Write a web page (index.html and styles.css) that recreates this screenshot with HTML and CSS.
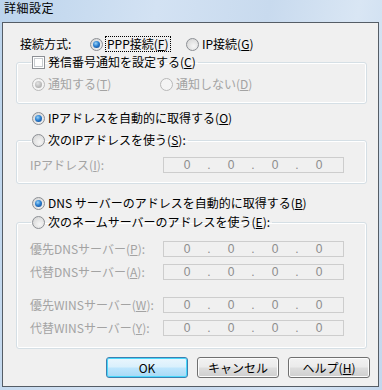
FILE: index.html
```html
<!DOCTYPE html>
<html lang="ja">
<head>
  <meta charset="UTF-8" />
  <title>詳細設定</title>
  <link rel="stylesheet" href="styles.css">
</head>
<body>

<div class="window">
  <div class="titlebar">詳細設定</div>

  <div class="client">

    <div class="row conn">
      <span class="conn-label">接続方式:</span>
      <span class="opt opt-ppp"><span class="radio checked"></span><span class="focus">PPP接続(<u>F</u>)</span></span>
      <span class="opt"><span class="radio"></span><span class="txt">IP接続(<u>G</u>)</span></span>
    </div>

    <fieldset class="group g1">
      <legend><span class="check"></span><span class="txt">発信番号通知を設定する(<u>C</u>)</span></legend>
      <div class="row sub disabled">
        <span class="opt opt-notify"><span class="radio checked"></span><span class="txt">通知する(<u>T</u>)</span></span>
        <span class="opt"><span class="radio"></span><span class="txt">通知しない(<u>D</u>)</span></span>
      </div>
    </fieldset>

    <div class="row solo ip-auto">
      <span class="radio checked"></span><span class="txt">IPアドレスを自動的に取得する(<u>O</u>)</span>
    </div>

    <fieldset class="group g2">
      <legend><span class="radio"></span><span class="txt">次のIPアドレスを使う(<u>S</u>):</span></legend>
      <div class="row field-row disabled">
        <span class="field-label">IPアドレス(<u>I</u>):</span>
        <span class="ipbox"><span class="oct">0</span><span class="dot">.</span><span class="oct">0</span><span class="dot">.</span><span class="oct">0</span><span class="dot">.</span><span class="oct">0</span></span>
      </div>
    </fieldset>

    <div class="row solo dns-auto">
      <span class="radio checked"></span><span class="txt">DNS サーバーのアドレスを自動的に取得する(<u>B</u>)</span>
    </div>

    <fieldset class="group g3">
      <legend><span class="radio"></span><span class="txt">次のネームサーバーのアドレスを使う(<u>E</u>):</span></legend>
      <div class="row field-row disabled">
        <span class="field-label">優先DNSサーバー(<u>P</u>):</span>
        <span class="ipbox"><span class="oct">0</span><span class="dot">.</span><span class="oct">0</span><span class="dot">.</span><span class="oct">0</span><span class="dot">.</span><span class="oct">0</span></span>
      </div>
      <div class="row field-row disabled close">
        <span class="field-label">代替DNSサーバー(<u>A</u>):</span>
        <span class="ipbox"><span class="oct">0</span><span class="dot">.</span><span class="oct">0</span><span class="dot">.</span><span class="oct">0</span><span class="dot">.</span><span class="oct">0</span></span>
      </div>
      <div class="row field-row disabled far">
        <span class="field-label">優先WINSサーバー(<u>W</u>):</span>
        <span class="ipbox"><span class="oct">0</span><span class="dot">.</span><span class="oct">0</span><span class="dot">.</span><span class="oct">0</span><span class="dot">.</span><span class="oct">0</span></span>
      </div>
      <div class="row field-row disabled close">
        <span class="field-label">代替WINSサーバー(<u>Y</u>):</span>
        <span class="ipbox"><span class="oct">0</span><span class="dot">.</span><span class="oct">0</span><span class="dot">.</span><span class="oct">0</span><span class="dot">.</span><span class="oct">0</span></span>
      </div>
    </fieldset>

    <div class="buttons">
      <button class="btn default">OK</button>
      <button class="btn">キャンセル</button>
      <button class="btn">ヘルプ(<u>H</u>)</button>
    </div>

  </div>
</div>

</body>
</html>
```

FILE: styles.css
```css
body {
  margin: 0;
  padding: 0;
  font-family: "Noto Sans CJK JP", "Liberation Sans", sans-serif;
  font-size: 12px;
  color: #000;
}
.window {
  width: 382px;
  height: 390px;
  box-sizing: border-box;
  padding: 0 2px 3px 2px;
  background: linear-gradient(100deg, #bcd4ec 0%, #d3e2f3 35%, #c8daee 60%, #d9e6f4 80%, #c3d7ed 100%);
}
.titlebar {
  height: 22px;
  line-height: 16px;
  padding-left: 2px;
  font-size: 12px;
  letter-spacing: 0.5px;
}
.client {
  height: 365px;
  box-sizing: border-box;
  border: 1px solid #555d66;
  margin-right: 1px;
  background: #f0f0f0;
  padding-top: 13px;
}
.row {
  display: flex;
  align-items: center;
  height: 16px;
  line-height: 16px;
  white-space: nowrap;
}
.conn {
  padding-left: 17px;
}
.conn-label {
  width: 70px;
}
.opt {
  display: flex;
  align-items: center;
}
.opt-ppp {
  width: 96px;
}
.txt {
  margin-left: 3px;
}
.focus {
  margin-left: 2px;
  padding: 0 1px;
  border: 1px dotted #000;
  line-height: 14px;
}

/* radio / checkbox */
.radio {
  display: inline-block;
  width: 11px;
  height: 11px;
  border: 1px solid #8c8f94;
  border-radius: 50%;
  background: radial-gradient(circle at 60% 65%, #f6f6f6 0%, #dcdcdc 70%, #cfd0d2 100%);
  position: relative;
  flex: none;
}
.radio.checked::after {
  content: "";
  position: absolute;
  left: 2px;
  top: 2px;
  width: 7px;
  height: 7px;
  border-radius: 50%;
  background: radial-gradient(circle at 40% 35%, #9ad3f7 0%, #2a7fd0 45%, #0d3d85 100%);
}
.disabled .radio {
  border-color: #b8b8b8;
  background: #f4f4f4;
}
.disabled .radio.checked::after {
  background: radial-gradient(circle at 40% 35%, #e4e4e4 0%, #b8b8b8 60%, #a0a0a0 100%);
}
.check {
  display: inline-block;
  width: 11px;
  height: 11px;
  border: 1px solid #8c8f94;
  background: #fff;
  box-shadow: inset 0 0 0 1px #fff, inset 0 0 0 2px #c8ccd0;
  flex: none;
}

/* group boxes */
.group {
  margin: 0 11px 0 13px;
  border: 1px solid #d5dfe5;
  border-radius: 3px;
  padding: 0;
  min-width: 0;
  box-shadow: inset 0 0 0 1px #fff;
}
.group legend {
  display: flex;
  align-items: center;
  height: 16px;
  line-height: 16px;
  margin-left: 14px;
  padding: 0 2px 0 1px;
  white-space: nowrap;
}
.g1 {
  margin-top: 2px;
  padding: 6px 0 11px 0;
}
.g2 {
  margin-top: 6px;
  padding: 9px 0 10px 0;
}
.g3 {
  margin-top: 3px;
  padding: 11px 0 12px 0;
}
.sub {
  padding-left: 15px;
}
.opt-notify {
  width: 128px;
}
.disabled {
  color: #a3a3a3;
}
.solo {
  padding-left: 29px;
}
.ip-auto {
  margin-top: 6px;
}
.dns-auto {
  margin-top: 11px;
}

/* address fields */
.field-row {
  padding-left: 13px;
}
.field-row.close {
  margin-top: 7px;
}
.field-row.far {
  margin-top: 17px;
}
.field-label {
  width: 133px;
}
.ipbox {
  display: flex;
  width: 181px;
  height: 16px;
  box-sizing: border-box;
  border: 1px solid #cdcdcd;
  background: #f0f0f0;
  padding-left: 4px;
  font-family: "Liberation Sans", sans-serif;
  font-size: 12px;
  line-height: 14px;
  color: #8c8c8c;
}
.oct {
  width: 38px;
  text-align: center;
}
.dot {
  width: 6px;
  text-align: center;
}

/* buttons */
.buttons {
  display: flex;
  gap: 9px;
  margin-top: 8px;
  padding-left: 103px;
}
.btn {
  width: 82px;
  height: 21px;
  padding: 0;
  border: 1px solid #707070;
  border-radius: 3px;
  font-family: "Noto Sans CJK JP", "Liberation Sans", sans-serif;
  font-size: 12px;
  line-height: 17px;
  color: #000;
  background: linear-gradient(#f2f2f2 0%, #ebebeb 48%, #dddddd 52%, #cfcfcf 100%);
  box-shadow: inset 0 0 0 1px #fcfcfc;
}
.btn.default {
  border-color: #3c7fb1;
  background: linear-gradient(#eaf6fd 0%, #d9f0fc 48%, #bee6fd 52%, #a7d9f5 100%);
  box-shadow: inset 0 0 0 1px #48d8fb;
}
```
